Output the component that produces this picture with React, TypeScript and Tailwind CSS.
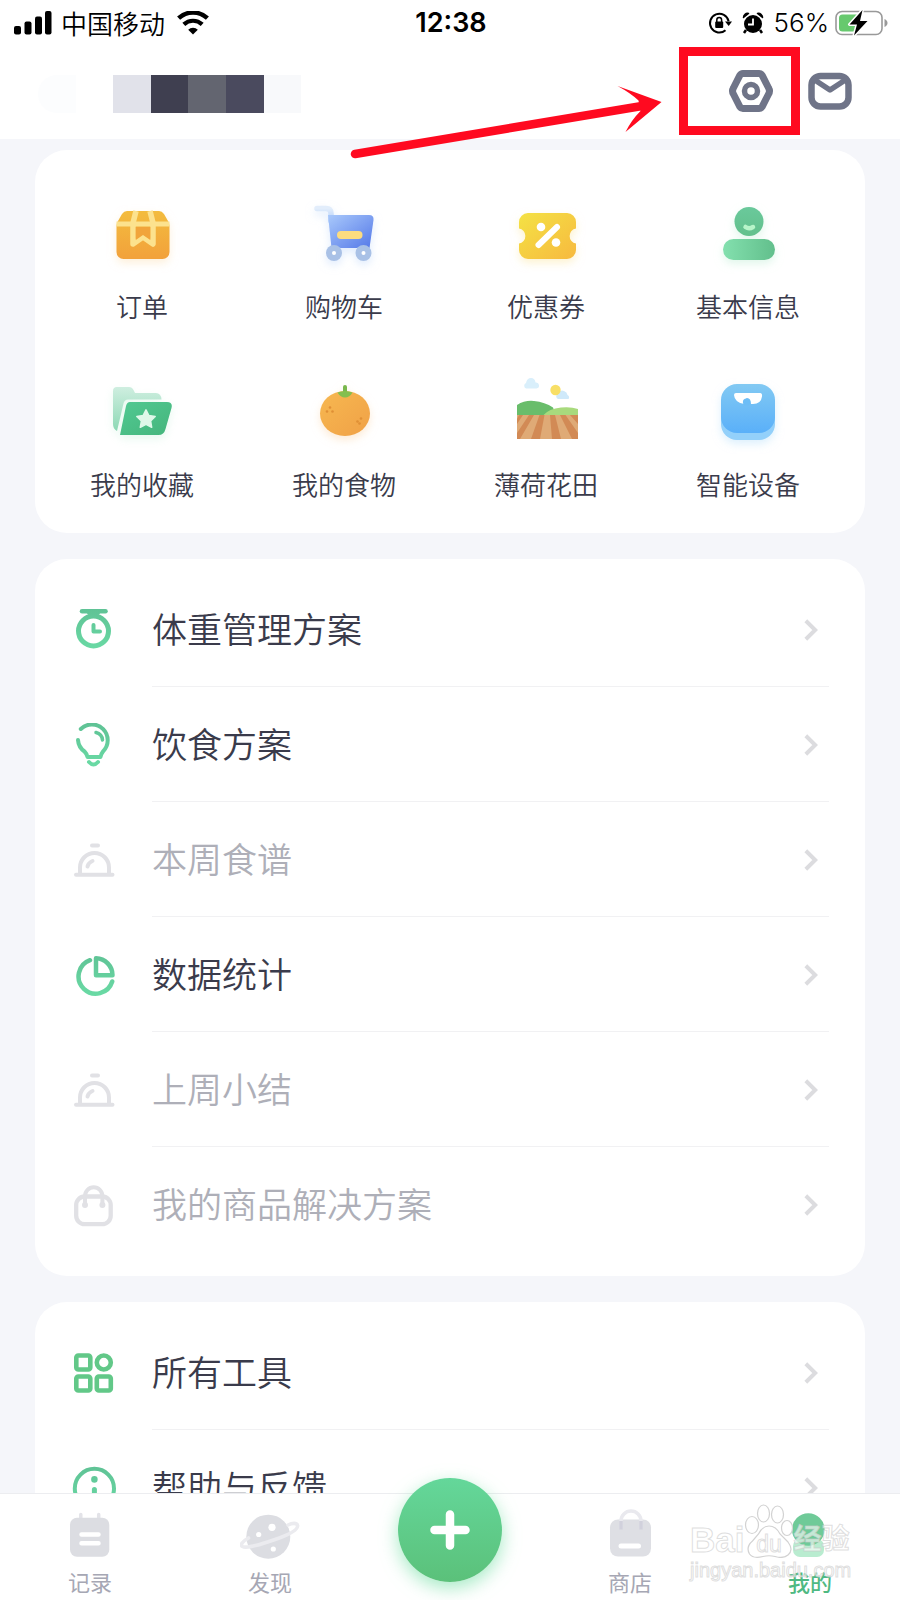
import type { ReactNode } from "react";

const FONT = "font-['Inter','Noto_Sans_CJK_SC',sans-serif]";

/* ---------- status bar ---------- */

function StatusBar() {
  return (
    <div className="grid h-[46px] grid-cols-[1fr_auto_1fr] items-center pr-3 pl-[14px] text-black">
      <div className="flex items-center">
        <svg className="h-6 w-[38px]" viewBox="0 0 38 24" aria-hidden="true">
          <rect x="0" y="15" width="7" height="8.500" rx="2" />
          <rect x="10.500" y="10.500" width="7" height="13" rx="2" />
          <rect x="21" y="5.500" width="7" height="18" rx="2" />
          <rect x="31" y="0" width="6.500" height="23.500" rx="2" />
        </svg>
        <span className="ml-[9px] font-['Noto_Sans_CJK_SC',sans-serif] text-[26px] leading-8 font-[350]">中国移动</span>
        <svg className="ml-3 h-6 w-8" viewBox="0 0 32 24" aria-hidden="true">
          <path d="M1.600 7.200a21 21 0 0 1 28.800 0" fill="none" stroke="#000" strokeWidth="4.400" />
          <path d="M6.800 13.400a13.400 13.400 0 0 1 18.400 0" fill="none" stroke="#000" strokeWidth="4.200" />
          <path d="M16 23.500l-4.800-4.800a6.900 6.900 0 0 1 9.600 0z" />
        </svg>
      </div>
      <span className="text-[27px] leading-8 font-semibold">12:38</span>
      <div className="flex items-center justify-end">
        <svg className="h-6 w-6" viewBox="0 0 24 24" fill="none" stroke="#000" aria-hidden="true">
          <path d="M20.600 10.200A9.400 9.400 0 1 0 17.500 19.300" strokeWidth="2" />
          <path d="M17 10.500h7l-3.300 4.600z" fill="#000" stroke="none" />
          <rect x="7.200" y="10.500" width="8" height="6.500" rx="1" fill="#000" stroke="none" />
          <path d="M8.800 11V9a2.400 2.400 0 0 1 4.800 0v2" strokeWidth="1.500" />
        </svg>
        <svg className="ml-[10px] h-6 w-[22px]" viewBox="0 0 22 24" aria-hidden="true">
          <circle cx="11" cy="13" r="9" />
          <path d="M4 19l-2 3M18 19l2 3" stroke="#000" strokeWidth="2.500" />
          <path d="M1.500 6.500a4 4 0 0 1 5-4zM20.500 6.500a4 4 0 0 0-5-4z" stroke="#000" strokeWidth="1.500" strokeLinejoin="round" />
          <path d="M11 7.500V13.500H6" fill="none" stroke="#fff" strokeWidth="1.800" />
        </svg>
        <span className="ml-[10px] text-[26px] leading-8 font-[350]">56%</span>
        <svg className="ml-[6px] h-[26px] w-[53px]" viewBox="0 0 53 26" aria-hidden="true">
          <rect x="1" y="1.500" width="46" height="23" rx="6" fill="#fff" stroke="#999" strokeWidth="1.600" />
          <path d="M7.500 4.500H25v17H7.500A3.500 3.500 0 0 1 4 18V8a3.500 3.500 0 0 1 3.500-3.500z" fill="#67c96e" />
          <path d="M49.500 9c4 1.500 4 6.500 0 8z" fill="#999" />
          <path d="M27.500 0L14.500 14.500h7.500L19 25.500l13.500-14.500H25z" fill="#000" stroke="#fff" strokeWidth="3" paintOrder="stroke" strokeLinejoin="round" />
        </svg>
      </div>
    </div>
  );
}

/* ---------- header ---------- */

function Header() {
  return (
    <header className="relative z-10 bg-white">
      <StatusBar />
      <div className="flex h-[93px] items-center pr-12 pb-[3px] pl-[38px]">
        <div className="mt-[6px] flex h-[38px]" aria-hidden="true">
          <span className="w-[38px] rounded-l-full bg-[#fcfdfe]" />
          <span className="w-[37px]" />
          <span className="w-[38px] bg-[#e1e2ea]" />
          <span className="w-[37px] bg-[#3f3f50]" />
          <span className="w-[38px] bg-[#636570]" />
          <span className="w-[38px] bg-[#4a4a5e]" />
          <span className="w-[37px] bg-[#f8f9fb]" />
        </div>
        <div className="ml-auto flex gap-[35px]">
          <button type="button" aria-label="设置">
            <svg className="h-11 w-11" viewBox="0 0 44 44" fill="none" stroke="#6f7488" strokeWidth="7" strokeLinejoin="round">
              <path d="M14 4.500h16a4 4 0 0 1 3.200 1.800l6.400 12.700a6 6 0 0 1 0 6l-6.400 12.700A4 4 0 0 1 30 39.500H14a4 4 0 0 1-3.200-1.800L4.400 25a6 6 0 0 1 0-6l6.400-12.700A4 4 0 0 1 14 4.500z" />
              <circle cx="22" cy="22" r="6.500" strokeWidth="5.500" />
            </svg>
          </button>
          <button type="button" aria-label="消息">
            <svg className="h-11 w-11" viewBox="0 0 44 44" fill="none" stroke="#6f7488">
              <rect x="3.500" y="7" width="37" height="30.500" rx="9" strokeWidth="6.500" />
              <path d="M6 10.500l16 10.500 16-10.500" strokeWidth="5.500" strokeLinejoin="round" />
            </svg>
          </button>
        </div>
      </div>
      <div className="absolute top-[47px] right-[100px] h-[88px] w-[121px] border-[9px] border-[#ff0a20]" aria-hidden="true" />
      <svg className="absolute top-20 right-[236px] h-20 w-[314px]" viewBox="350 80 314 80" aria-hidden="true">
        <path d="M355 154L645 105.500" stroke="#ff0a20" strokeWidth="8.500" strokeLinecap="round" />
        <path d="M661.500 102L617.500 86q13 7 21 14.500l2 10.500q-9 9-15 21z" fill="#ff0a20" />
      </svg>
    </header>
  );
}

/* ---------- shortcut grid ---------- */

function Gradient({ id, from, to, diagonal = false }: { id: string; from: string; to: string; diagonal?: boolean }) {
  return (
    <linearGradient id={id} x1="0" y1="0" x2={diagonal ? "1" : "0"} y2="1">
      <stop offset="0" stopColor={from} />
      <stop offset="1" stopColor={to} />
    </linearGradient>
  );
}

function OrderIcon() {
  return (
    <svg className="h-[72px] w-[72px] drop-shadow-[0_4px_4px_#fbe3bb88]" viewBox="0 0 72 72">
      <defs><Gradient id="order" from="#f3bc3e" to="#f2a13b" /></defs>
      <path d="M21 12h32q3 0 5 3l4 7q1.500 2 1.500 5v26a7 7 0 0 1-7 7h-39a7 7 0 0 1-7-7V27q0-3 1.500-5l4-7q2-3 5-3z" fill="url(#order)" />
      <path d="M10.500 22.500h53v5h-53z" fill="#fce28e" />
      <path d="M30 12L27 24V45l10-7 10 7V24l-3-12" fill="none" stroke="#fce28e" strokeWidth="5.500" strokeLinejoin="round" />
      <path d="M29.800 28h14.500v13L37 36l-7.200 5z" fill="#f1a43b" />
    </svg>
  );
}

function CartIcon() {
  return (
    <svg className="h-[72px] w-[72px] drop-shadow-[0_4px_4px_#c5dcfb88]" viewBox="0 0 72 72">
      <defs>
        <Gradient id="cart" from="#a9c9fb" to="#5478e8" diagonal />
        <Gradient id="cartHandle" from="#e2edfb" to="#b3d0fa" />
      </defs>
      <path d="M9 9.500h9q5 0 5 5V22" fill="none" stroke="url(#cartHandle)" strokeWidth="5.500" strokeLinecap="round" />
      <path d="M20 16h41q5 0 4.500 5L61.500 49H23.500z" fill="url(#cart)" />
      <rect x="29" y="32" width="25.500" height="8" rx="4" fill="#fddc7f" />
      <circle cx="26" cy="54" r="8" fill="#a9c1e6" /><circle cx="26" cy="54" r="2" fill="#fff" />
      <circle cx="55.500" cy="54" r="8" fill="#a9c1e6" /><circle cx="55.500" cy="54" r="2" fill="#fff" />
    </svg>
  );
}

function CouponIcon() {
  return (
    <svg className="h-[72px] w-[72px] drop-shadow-[0_4px_4px_#fbe9a988]" viewBox="0 0 72 72">
      <defs><Gradient id="coupon" from="#f4e244" to="#f7b93f" diagonal /></defs>
      <path d="M18 14h39a9 9 0 0 1 9 9v6.500a7.600 7.600 0 0 0 0 15V51a9 9 0 0 1-9 9H18a9 9 0 0 1-9-9v-6.500a7.600 7.600 0 0 0 0-15V23a9 9 0 0 1 9-9z" fill="url(#coupon)" />
      <path d="M28.500 46l18.500-18" stroke="#fff" strokeWidth="6" strokeLinecap="round" />
      <circle cx="31" cy="28" r="4.300" fill="#fff" /><circle cx="46" cy="43.500" r="4.300" fill="#fff" />
    </svg>
  );
}

function PersonIcon() {
  return (
    <svg className="h-[72px] w-[72px] drop-shadow-[0_4px_4px_#c6f0d988]" viewBox="0 0 72 72">
      <defs>
        <Gradient id="head" from="#6ac99b" to="#62c08c" />
        <linearGradient id="torso"><stop offset="0" stopColor="#83e0ae" /><stop offset="1" stopColor="#62bf8c" /></linearGradient>
      </defs>
      <circle cx="37" cy="22.500" r="14.500" fill="url(#head)" />
      <path d="M33.500 28q3.500 2.500 7.500 0" fill="none" stroke="#b7f5c9" strokeWidth="4.500" strokeLinecap="round" />
      <rect x="11" y="40" width="52" height="21" rx="10.500" fill="url(#torso)" />
    </svg>
  );
}

function FolderIcon() {
  return (
    <svg className="h-[72px] w-[72px] drop-shadow-[0_4px_4px_#c6f0d966]" viewBox="0 0 72 72">
      <defs>
        <Gradient id="folderBack" from="#cfeee0" to="#8cd8b4" />
        <Gradient id="folderFront" from="#51c992" to="#45b57c" diagonal />
      </defs>
      <path d="M11 10h12q3 0 4.500 3l1.500 3h21q5 0 5.500 6.500H22q-3.500 0-4.500 4L11 54Q7 52 7 47V14q0-4 4-4z" fill="url(#folderBack)" />
      <path d="M24 25h37q6 0 4.500 6l-6 21q-1.500 6-7 6H14l6-29q1-4 4-4z" fill="url(#folderFront)" />
      <path d="M40 32.800l2.900 5.800 6.300.9-4.600 4.500 1.100 6.300-5.700-3-5.700 3 1.100-6.300-4.600-4.500 6.300-.9z" fill="#dff8e9" stroke="#dff8e9" strokeWidth="1.500" strokeLinejoin="round" />
    </svg>
  );
}

function OrangeIcon() {
  return (
    <svg className="h-[72px] w-[72px] drop-shadow-[0_4px_4px_#fbd9b388]" viewBox="0 0 72 72">
      <defs><Gradient id="orange" from="#f7b850" to="#f0a147" diagonal /></defs>
      <ellipse cx="37" cy="36.500" rx="25" ry="22.500" fill="url(#orange)" />
      <path d="M37 10v6" stroke="#79b84d" strokeWidth="4" strokeLinecap="round" />
      <path d="M29.500 15.500q7.500-3 15 0-3 5-7.500 5t-7.500-5z" fill="#84bf4f" />
      <g fill="#e08f35">
        <circle cx="22" cy="30.500" r="1.300" /><circle cx="19" cy="34.500" r="1.300" /><circle cx="24.500" cy="34.500" r="1.300" />
        <circle cx="53" cy="41.500" r="1.300" /><circle cx="49.500" cy="44.500" r="1.300" /><circle cx="51.500" cy="46.500" r="1.300" />
      </g>
    </svg>
  );
}

function FieldIcon() {
  return (
    <svg className="h-[72px] w-[72px]" viewBox="0 0 72 72">
      <defs><clipPath id="soil"><path d="M7 38h61v24H7z" /></clipPath></defs>
      <path d="M16 11.500a3 3 0 0 1 0-5.500q1-5 5-5t4.500 4.500a3 3 0 0 1 1 6z" fill="#d9effb" />
      <path d="M48 22a3 3 0 0 1 0-5.500q2-4 6-2.500 3 1 3.500 4a2.500 2.500 0 0 1 1 4z" fill="#cfe9fa" />
      <circle cx="45.500" cy="13" r="5.200" fill="#f8df66" />
      <path d="M7 28q8-5 17-4 11 1 19 6.500L46 38.500H7z" fill="#69bd6b" />
      <path d="M33 38.500q6-7 18-8 10-1 17 1.500v7z" fill="#a8da7d" />
      <g clipPath="url(#soil)">
        <path d="M7 38h61v24H7z" fill="#d28a55" />
        <path d="M7 38h2l-2 4zM13 38h6L7 56v-9zM24 38h5.500L21 62H10zM34.500 38H40L42 62H30zM45 38h5l12 24H51zM55.500 38H60l8 9v9z" fill="#dfaa76" />
      </g>
    </svg>
  );
}

function ScaleIcon() {
  return (
    <svg className="h-[72px] w-[72px] drop-shadow-[0_4px_4px_#c0e2fb88]" viewBox="0 0 72 72">
      <defs><Gradient id="scale" from="#82c9f3" to="#5ab0f9" /></defs>
      <rect x="9" y="14" width="54" height="49" rx="16" fill="#93d0fa" />
      <rect x="9" y="7" width="54" height="49" rx="16" fill="url(#scale)" />
      <path d="M24 16h24q2.500 0 2 3.500-1 7.500-9 7.500h-2q0-6-4-6-2 0-2.500 6-10-1.500-10.500-9 0-2 2-2z" fill="#fff" />
      <circle cx="34.500" cy="25" r="3.600" fill="#6dbdf6" />
    </svg>
  );
}

const shortcuts: { label: string; icon: ReactNode }[] = [
  { label: "订单", icon: <OrderIcon /> },
  { label: "购物车", icon: <CartIcon /> },
  { label: "优惠券", icon: <CouponIcon /> },
  { label: "基本信息", icon: <PersonIcon /> },
  { label: "我的收藏", icon: <FolderIcon /> },
  { label: "我的食物", icon: <OrangeIcon /> },
  { label: "薄荷花田", icon: <FieldIcon /> },
  { label: "智能设备", icon: <ScaleIcon /> },
];

/* ---------- list rows ---------- */

function LineIcon({ muted = false, id, children }: { muted?: boolean; id: string; children: ReactNode }) {
  return (
    <svg
      className="h-11 w-11 shrink-0"
      viewBox="0 0 44 44"
      fill="none"
      stroke={muted ? "#e1e1e5" : `url(#${id})`}
      strokeWidth="5"
      strokeLinecap="round"
      strokeLinejoin="round"
      aria-hidden="true"
    >
      <defs>
        <linearGradient id={id} gradientUnits="userSpaceOnUse" x1="0" y1="0" x2="0" y2="44">
          <stop offset="0" stopColor="#5fc295" />
          <stop offset="1" stopColor="#6adba5" />
        </linearGradient>
      </defs>
      {children}
    </svg>
  );
}

function ClocheIcon({ id }: { id: string }) {
  return (
    <LineIcon id={id} muted>
      <path d="M20 7.500h6" strokeWidth="4" />
      <path d="M8 36v-6.500a14.500 14.500 0 0 1 29 0V36" strokeWidth="4" />
      <path d="M4 36.800h36.500" strokeWidth="4" />
      <path d="M15.500 28.500q1-4 5-5.500" strokeWidth="4" />
    </LineIcon>
  );
}

interface Row {
  label: string;
  muted?: boolean;
  icon: ReactNode;
}

const plans: Row[] = [
  {
    label: "体重管理方案",
    icon: (
      <LineIcon id="li-weight">
        <path d="M10 3.200h23.500" strokeWidth="4.500" />
        <path d="M16 5h11l-3 3h-5z" strokeWidth="2" />
        <circle cx="21.500" cy="23" r="15" />
        <path d="M21.500 17v6.500h6.500" strokeWidth="4" />
      </LineIcon>
    ),
  },
  {
    label: "饮食方案",
    icon: (
      <LineIcon id="li-diet">
        <path d="M8.800 6A15.500 15.500 0 1 1 31 28.500Q29 31 28.500 34H15.500Q15 31 12.500 28.500A15.500 15.500 0 0 1 6 17" strokeWidth="4" />
        <path d="M24 9.500q6 1.500 6.500 7.500" strokeWidth="3.500" />
        <path d="M17 39q4.500 5 9 0" strokeWidth="4" />
      </LineIcon>
    ),
  },
  { label: "本周食谱", muted: true, icon: <ClocheIcon id="li-menu" /> },
  {
    label: "数据统计",
    icon: (
      <LineIcon id="li-stats">
        <path d="M18 7.200A17.200 17.200 0 1 0 40.200 28.500" strokeWidth="4.500" />
        <path d="M24 5.200v17h16.500A17 17 0 0 0 24 5.200z" strokeWidth="4.500" />
      </LineIcon>
    ),
  },
  { label: "上周小结", muted: true, icon: <ClocheIcon id="li-summary" /> },
  {
    label: "我的商品解决方案",
    muted: true,
    icon: (
      <LineIcon id="li-goods" muted>
        <rect x="4.200" y="13.500" width="34.500" height="27.700" rx="8.500" strokeWidth="4.300" />
        <path d="M13 21.500V13a8.700 8.700 0 0 1 17.400 0v8.500" strokeWidth="4" />
        <path d="M13 22v.1M30.400 22v.1" strokeWidth="6" />
      </LineIcon>
    ),
  },
];

const tools: Row[] = [
  {
    label: "所有工具",
    icon: (
      <LineIcon id="li-tools">
        <g stroke="#62c888" strokeWidth="4.600">
          <rect x="4.300" y="4.500" width="14" height="14" rx="2" />
          <circle cx="31.800" cy="11.500" r="7" />
          <rect x="4.300" y="25.500" width="14" height="14" rx="2" />
          <rect x="24.800" y="25.500" width="14" height="14" rx="2" />
        </g>
      </LineIcon>
    ),
  },
  {
    label: "帮助与反馈",
    icon: (
      <LineIcon id="li-help">
        <circle cx="22.400" cy="22.400" r="19.600" strokeWidth="4" />
        <path d="M22.400 13.300v.1" strokeWidth="6.500" />
        <path d="M22.400 23.500V32" />
      </LineIcon>
    ),
  },
];

function RowList({ rows }: { rows: Row[] }) {
  return (
    <section className="rounded-[32px] bg-white pt-[13px] pr-9 pb-[14px] pl-[37px]">
      <ul>
        {rows.map((row) => (
          <li key={row.label} className="group">
            <a href="#" className="flex h-[115px] items-center gap-9">
              {row.icon}
              <span className="flex h-full flex-1 items-center justify-between border-b border-[#f1f1f3] pt-px pr-[11px] group-last:border-transparent">
                <span className={row.muted ? "text-[35px] leading-10 font-[350] text-[#aeafb8]" : "text-[35px] leading-10 font-[350] text-[#3a3b4b]"}>
                  {row.label}
                </span>
                <svg className="h-[22px] w-[14px]" viewBox="0 0 14 22" fill="none" stroke="#dcdcdf" strokeWidth="4" aria-hidden="true">
                  <path d="M1.800 1.800L11.200 11l-9.400 9.200" />
                </svg>
              </span>
            </a>
          </li>
        ))}
      </ul>
    </section>
  );
}

/* ---------- bottom navigation ---------- */

function NavItem({ label, active = false, children }: { label: string; active?: boolean; children: ReactNode }) {
  return (
    <a href="#" className="flex flex-col items-center gap-[5px] pt-[11px] pb-1">
      <svg className="h-[60px] w-[60px]" viewBox="0 0 60 60" aria-hidden="true">{children}</svg>
      <span className={active ? "text-[22px] leading-[26px] font-medium text-[#4fb982]" : "text-[22px] leading-[26px] text-[#a6a7b4]"}>
        {label}
      </span>
    </a>
  );
}

function Watermark() {
  return (
    <div
      className="pointer-events-none absolute right-[50px] bottom-[18px] w-[160px] font-['Liberation_Sans','Noto_Sans_CJK_SC',sans-serif] text-white/60 [-webkit-text-stroke:1px_#c9c9c999]"
      aria-hidden="true"
    >
      <div className="flex h-[54px] items-end">
        <span className="text-[35px] leading-9 font-bold">Bai</span>
        <div className="relative h-[54px] w-[49px] shrink-0">
          <svg className="h-[54px] w-[49px]" viewBox="0 0 49 54" fill="#ffffff99" stroke="#d2d2d2" strokeWidth="1.200">
            <ellipse cx="8" cy="21" rx="6.500" ry="8.500" />
            <ellipse cx="19.500" cy="9.500" rx="6" ry="8.500" />
            <ellipse cx="33.500" cy="10.500" rx="6" ry="8.500" />
            <ellipse cx="43" cy="24" rx="5.500" ry="7.500" />
            <path d="M25 22q7 0 11 8l8 8q6 8 0 13-5 4-13 1.500-6-1.500-12 0Q9 55 5.500 50q-4-7 3-13l6-7q4-8 10.500-8z" />
          </svg>
          <span className="absolute inset-x-0 bottom-0 text-center text-[23px] leading-7">du</span>
        </div>
        <span className="text-[28px] leading-9 font-bold">经验</span>
      </div>
      <div className="text-[20px] leading-6">jingyan.baidu.com</div>
    </div>
  );
}

function BottomNav() {
  return (
    <nav className="relative grid shrink-0 grid-cols-5 border-t border-[#ecedf0] bg-white">
      <NavItem label="记录">
        <path d="M20.800 9.500v6M38.700 9.500v6" stroke="#e3e3e8" strokeWidth="3.500" strokeLinecap="round" />
        <rect x="10" y="12.700" width="39.300" height="39" rx="7" fill="#dcdde2" />
        <path d="M21.500 29.500h17M21.500 38.200h17" stroke="#fff" strokeWidth="4.500" strokeLinecap="round" />
      </NavItem>
      <NavItem label="发现">
        <circle cx="28.300" cy="31.700" r="22" fill="#dcdde2" />
        <path d="M8.500 33C2 36.500 0 40 2.500 41.500 7 44 22 39 35 34.500S58.500 25 57.500 20.500C57 17.500 52 18 48 20" fill="none" stroke="#ebebef" strokeWidth="3.600" strokeLinecap="round" />
        <circle cx="32" cy="22.300" r="3.600" fill="#fff" />
        <circle cx="18.700" cy="29.500" r="2.600" fill="#fff" />
        <circle cx="33.300" cy="44" r="2.600" fill="#fff" />
      </NavItem>
      <div className="relative">
        <button
          type="button"
          aria-label="添加"
          className="absolute -top-4 left-1/2 flex h-[104px] w-[104px] -translate-x-1/2 items-center justify-center rounded-full bg-linear-to-b from-[#64d79a] to-[#5bc17a] shadow-[0_6px_18px_#6bdc9f99]"
        >
          <svg className="h-10 w-10" viewBox="0 0 40 40" stroke="#fff" strokeWidth="8.500" strokeLinecap="round">
            <path d="M20 4.500v31M4.500 20h31" />
          </svg>
        </button>
      </div>
      <NavItem label="商店">
        <rect x="10" y="14.500" width="41" height="37" rx="8" fill="#dedfe4" />
        <path d="M21 24V16a9.500 9.500 0 0 1 20 0v8" fill="none" stroke="#e9e9ee" strokeWidth="3.500" />
        <path d="M21 16v8.500M41 16v8.500" stroke="#d1d1dc" strokeWidth="3.500" />
        <path d="M21 41h17.500" stroke="#fff" strokeWidth="5" strokeLinecap="round" />
      </NavItem>
      <NavItem label="我的" active>
        <rect x="13" y="34" width="31" height="18" rx="7" fill="#b9ecd0" />
        <circle cx="28.300" cy="24.500" r="16.300" fill="#6fca98" />
      </NavItem>
      <Watermark />
    </nav>
  );
}

export default function App() {
  return (
    <div className={`flex h-screen flex-col overflow-hidden bg-[#f5f6fa] ${FONT}`}>
      <Header />
      <main className="flex min-h-0 flex-1 flex-col gap-[26px] overflow-y-auto px-[35px] pt-[11px] [scrollbar-width:none] *:shrink-0">
        <section className="rounded-[32px] bg-white pt-[49px] pr-4 pb-[29px] pl-[6px]">
          <ul className="grid grid-cols-4 gap-y-[51px]">
            {shortcuts.map((s) => (
              <li key={s.label}>
                <a href="#" className="flex flex-col items-center gap-[19px]">
                  {s.icon}
                  <span className="text-[26px] leading-9 font-[350] text-[#3a3b4b]">{s.label}</span>
                </a>
              </li>
            ))}
          </ul>
        </section>
        <RowList rows={plans} />
        <RowList rows={tools} />
      </main>
      <BottomNav />
    </div>
  );
}
